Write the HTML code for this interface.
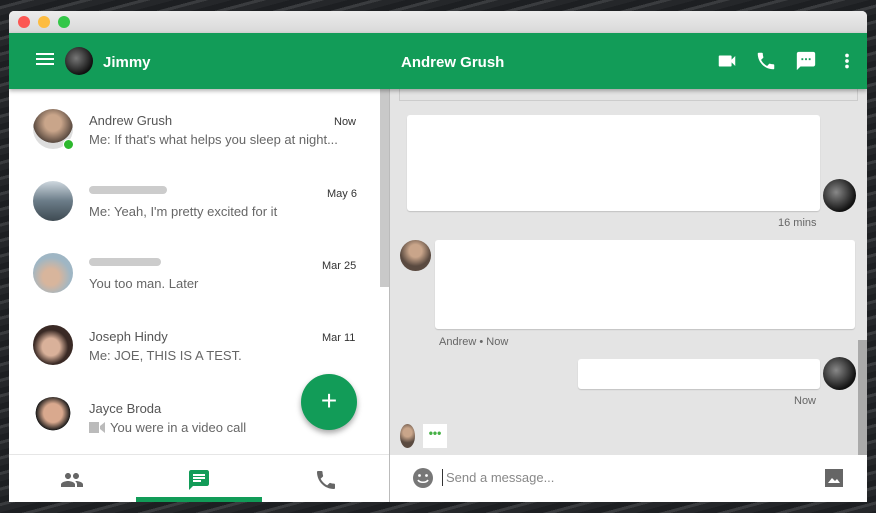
<!DOCTYPE html>
<html><head><meta charset="utf-8"><style>
*{margin:0;padding:0;box-sizing:border-box}
body{width:876px;height:513px;overflow:hidden;position:relative;font-family:"Liberation Sans",Arial,sans-serif;background:#2b2d30;
background-image:repeating-linear-gradient(165deg,#1d1f22 0 6px,#3a3c3f 6px 9px,#25272a 9px 15px);}
.a{position:absolute}
.win{left:9px;top:11px;width:858px;height:491px;background:#fff;border-radius:5px 5px 0 0;overflow:hidden}
.title{left:0;top:0;width:858px;height:22px;background:linear-gradient(#ececec,#d8d8d8)}
.dot{top:5px;width:12px;height:12px;border-radius:50%}
.hdr{left:0;top:22px;width:858px;height:56px;background:#129c58;box-shadow:0 2px 4px rgba(0,0,0,.3);z-index:5}
.hdr .t{color:#fff;font-weight:bold;font-size:15px;top:20px}
.av{border-radius:50%}
.row .n{font-size:13px;color:#555}
.row .m{font-size:13px;color:#666}
.row .d{font-size:11px;color:#333}
.right{left:381px;top:78px;width:477px;height:366px;background:#e4e4e4}
.bub{background:#fff;border-radius:3px;box-shadow:0 1px 1px rgba(0,0,0,.15)}
.sm{font-size:11px;color:#666}
</style></head><body>
<div class="a win">
 <div class="a title"></div>
 <div class="a dot" style="left:9px;background:#fc5753"></div>
 <div class="a dot" style="left:29px;background:#fdbc40"></div>
 <div class="a dot" style="left:49px;background:#33c748"></div>
 <div class="a hdr">
  <div class="a" style="left:27px;top:20px;width:18px;height:2px;background:#fff;box-shadow:0 5px 0 #fff,0 10px 0 #fff"></div>
  <div class="a av" style="left:56px;top:14px;width:28px;height:28px;background:radial-gradient(circle at 40% 40%,#777,#111 70%)"></div>
  <div class="a t" style="left:94px;top:21px">Jimmy</div>
  <div class="a t" style="left:392px;top:21px">Andrew Grush</div>
  <svg class="a" style="left:707px;top:17px" width="22" height="22" viewBox="0 0 24 24"><path fill="#fff" d="M17 10.5V7c0-.55-.45-1-1-1H4c-.55 0-1 .45-1 1v10c0 .55.45 1 1 1h12c.55 0 1-.45 1-1v-3.5l4 4v-11l-4 4z"/></svg>
  <svg class="a" style="left:746px;top:17px" width="22" height="22" viewBox="0 0 24 24"><path fill="#fff" d="M6.6 10.8c1.4 2.8 3.8 5.1 6.6 6.6l2.2-2.2c.3-.3.7-.4 1-.2 1.1.4 2.3.6 3.6.6.6 0 1 .4 1 1V20c0 .6-.4 1-1 1-9.4 0-17-7.6-17-17 0-.6.4-1 1-1h3.5c.6 0 1 .4 1 1 0 1.3.2 2.5.6 3.6.1.3 0 .7-.2 1L6.6 10.8z"/></svg>
  <svg class="a" style="left:786px;top:17px" width="22" height="22" viewBox="0 0 24 24"><path fill="#fff" d="M20 2H4c-1.1 0-2 .9-2 2v18l4-4h14c1.1 0 2-.9 2-2V4c0-1.1-.9-2-2-2zM9 11H7V9h2v2zm4 0h-2V9h2v2zm4 0h-2V9h2v2z"/></svg>
  <svg class="a" style="left:827px;top:17px" width="22" height="22" viewBox="0 0 24 24"><path fill="#fff" d="M12 8a2 2 0 1 0 0-4 2 2 0 0 0 0 4zm0 2a2 2 0 1 0 0 4 2 2 0 0 0 0-4zm0 6a2 2 0 1 0 0 4 2 2 0 0 0 0-4z"/></svg>
 </div>
 <div class="a" style="left:371px;top:78px;width:9px;height:198px;background:#c9c9c9"></div>
 <div class="a" style="left:380px;top:78px;width:1px;height:413px;background:#bbb"></div>
 <div class="row">
  <div class="a av" style="left:24px;top:98px;width:40px;height:40px;background:radial-gradient(circle at 50% 35%,#c9a58a 25%,#5a4a40 60%,#ddd 61%)"></div>
  <div class="a" style="left:54px;top:128px;width:11px;height:11px;border-radius:50%;background:#2db82d;border:1.5px solid #fff"></div>
  <div class="a n" style="left:80px;top:102px">Andrew Grush</div>
  <div class="a d" style="left:325px;top:105px">Now</div>
  <div class="a m" style="left:80px;top:121px">Me: If that's what helps you sleep at night...</div>

  <div class="a av" style="left:24px;top:170px;width:40px;height:40px;background:linear-gradient(#cfd8df,#6b7c88 50%,#3e4a52)"></div>
  <div class="a" style="left:80px;top:175px;width:78px;height:8px;border-radius:4px;background:#ccc"></div>
  <div class="a d" style="left:318px;top:177px">May 6</div>
  <div class="a m" style="left:80px;top:193px">Me: Yeah, I'm pretty excited for it</div>

  <div class="a av" style="left:24px;top:242px;width:40px;height:40px;background:radial-gradient(circle at 45% 60%,#d8b59c 25%,#9fb6c4 60%)"></div>
  <div class="a" style="left:80px;top:247px;width:72px;height:8px;border-radius:4px;background:#ccc"></div>
  <div class="a d" style="left:313px;top:249px">Mar 25</div>
  <div class="a m" style="left:80px;top:265px">You too man. Later</div>

  <div class="a av" style="left:24px;top:314px;width:40px;height:40px;background:radial-gradient(circle at 45% 55%,#d9b19a 28%,#3a2a25 55%)"></div>
  <div class="a n" style="left:80px;top:318px">Joseph Hindy</div>
  <div class="a d" style="left:313px;top:321px">Mar 11</div>
  <div class="a m" style="left:80px;top:337px">Me: JOE, THIS IS A TEST.</div>

  <div class="a av" style="left:24px;top:386px;width:40px;height:40px;background:radial-gradient(circle at 50% 40%,#d9a98e 30%,#1a1a1a 55%,#fff 56%)"></div>
  <div class="a n" style="left:80px;top:390px">Jayce Broda</div>
  <svg class="a" style="left:80px;top:411px" width="16" height="11" viewBox="0 0 16 11"><path fill="#bbb" d="M0 0h10v11H0zM11 4l5-4v11l-5-4z"/></svg>
  <div class="a m" style="left:101px;top:409px">You were in a video call</div>
 </div>
 <div class="a av" style="left:292px;top:363px;width:56px;height:56px;background:#129c58;box-shadow:0 3px 6px rgba(0,0,0,.35);color:#fff;font-size:28px;text-align:center;line-height:54px">+</div>
 <div class="a" style="left:0;top:443px;width:380px;height:1px;background:#e6e6e6"></div>
 <svg class="a" style="left:51px;top:457px" width="24" height="24" viewBox="0 0 24 24"><path fill="#666" d="M16 11c1.66 0 3-1.34 3-3s-1.34-3-3-3-3 1.34-3 3 1.34 3 3 3zm-8 0c1.66 0 3-1.34 3-3S9.66 5 8 5 5 6.34 5 8s1.34 3 3 3zm0 2c-2.33 0-7 1.17-7 3.5V19h14v-2.5c0-2.330-4.67-3.5-7-3.5zm8 0c-.29 0-.62.02-.97.05 1.16.84 1.970 1.97 1.97 3.45V19h6v-2.5c0-2.33-4.67-3.5-7-3.5z"/></svg>
 <svg class="a" style="left:178px;top:457px" width="24" height="24" viewBox="0 0 24 24"><path fill="#129c58" d="M20 2H4c-1.1 0-2 .9-2 2v18l4-4h14c1.1 0 2-.9 2-2V4c0-1.1-.9-2-2-2zM6 9h12v2H6zm8 5H6v-2h8zm4-6H6V6h12z"/></svg>
 <div class="a" style="left:127px;top:486px;width:126px;height:5px;background:#129c58"></div>
 <svg class="a" style="left:305px;top:457px" width="24" height="24" viewBox="0 0 24 24"><path fill="#666" d="M6.6 10.8c1.4 2.8 3.8 5.1 6.6 6.6l2.2-2.2c.3-.3.7-.4 1-.2 1.1.4 2.3.6 3.6.6.6 0 1 .4 1 1V20c0 .6-.4 1-1 1-9.4 0-17-7.6-17-17 0-.6.4-1 1-1h3.5c.6 0 1 .4 1 1 0 1.3.2 2.5.6 3.6.1.3 0 .7-.2 1L6.6 10.8z"/></svg>
 <div class="a right">
  <div class="a" style="left:9px;top:-5px;width:459px;height:17px;border:1px solid #ccc;border-top:none"></div>
  <div class="a bub" style="left:17px;top:26px;width:413px;height:96px"></div>
  <div class="a av" style="left:433px;top:90px;width:33px;height:33px;background:radial-gradient(circle at 40% 40%,#888,#111 70%)"></div>
  <div class="a sm" style="left:388px;top:128px">16 mins</div>
  <div class="a av" style="left:10px;top:151px;width:31px;height:31px;background:radial-gradient(circle at 50% 35%,#c9a58a 25%,#5a4a40 60%)"></div>
  <div class="a bub" style="left:45px;top:151px;width:420px;height:89px"></div>
  <div class="a sm" style="left:49px;top:247px">Andrew • Now</div>
  <div class="a bub" style="left:188px;top:270px;width:242px;height:30px"></div>
  <div class="a av" style="left:433px;top:268px;width:33px;height:33px;background:radial-gradient(circle at 40% 40%,#888,#111 70%)"></div>
  <div class="a sm" style="left:404px;top:306px">Now</div>
  <div class="a av" style="left:10px;top:335px;width:15px;height:24px;background:radial-gradient(circle at 50% 35%,#c9a58a 25%,#5a4a40 60%)"></div>
  <div class="a" style="left:33px;top:335px;width:24px;height:24px;background:#fff;color:#45b045;font-size:12px;font-weight:bold;line-height:18px;text-align:center">•••</div>
  <div class="a" style="left:468px;top:251px;width:9px;height:115px;background:#aaa"></div>
 </div>
 <div class="a" style="left:381px;top:444px;width:477px;height:47px;background:#fff"></div>
 <svg class="a" style="left:403px;top:456px" width="22" height="22" viewBox="0 0 22 22"><circle cx="11" cy="11" r="10" fill="#777"/><circle cx="7.5" cy="8.5" r="1.4" fill="#fff"/><circle cx="14.5" cy="8.5" r="1.4" fill="#fff"/><path d="M6 13c1.5 3 8.5 3 10 0" stroke="#fff" stroke-width="1.6" fill="none"/></svg>
 <div class="a" style="left:433px;top:458px;width:1px;height:17px;background:#333"></div>
 <div class="a" style="left:437px;top:459px;font-size:13px;color:#888">Send a message...</div>
 <svg class="a" style="left:816px;top:458px" width="18" height="18" viewBox="0 0 18 18"><rect width="18" height="18" fill="#666"/><path d="M3 14l4-5 3 3 2-2 3 4z" fill="#fff"/></svg>
</div>
</body></html>
